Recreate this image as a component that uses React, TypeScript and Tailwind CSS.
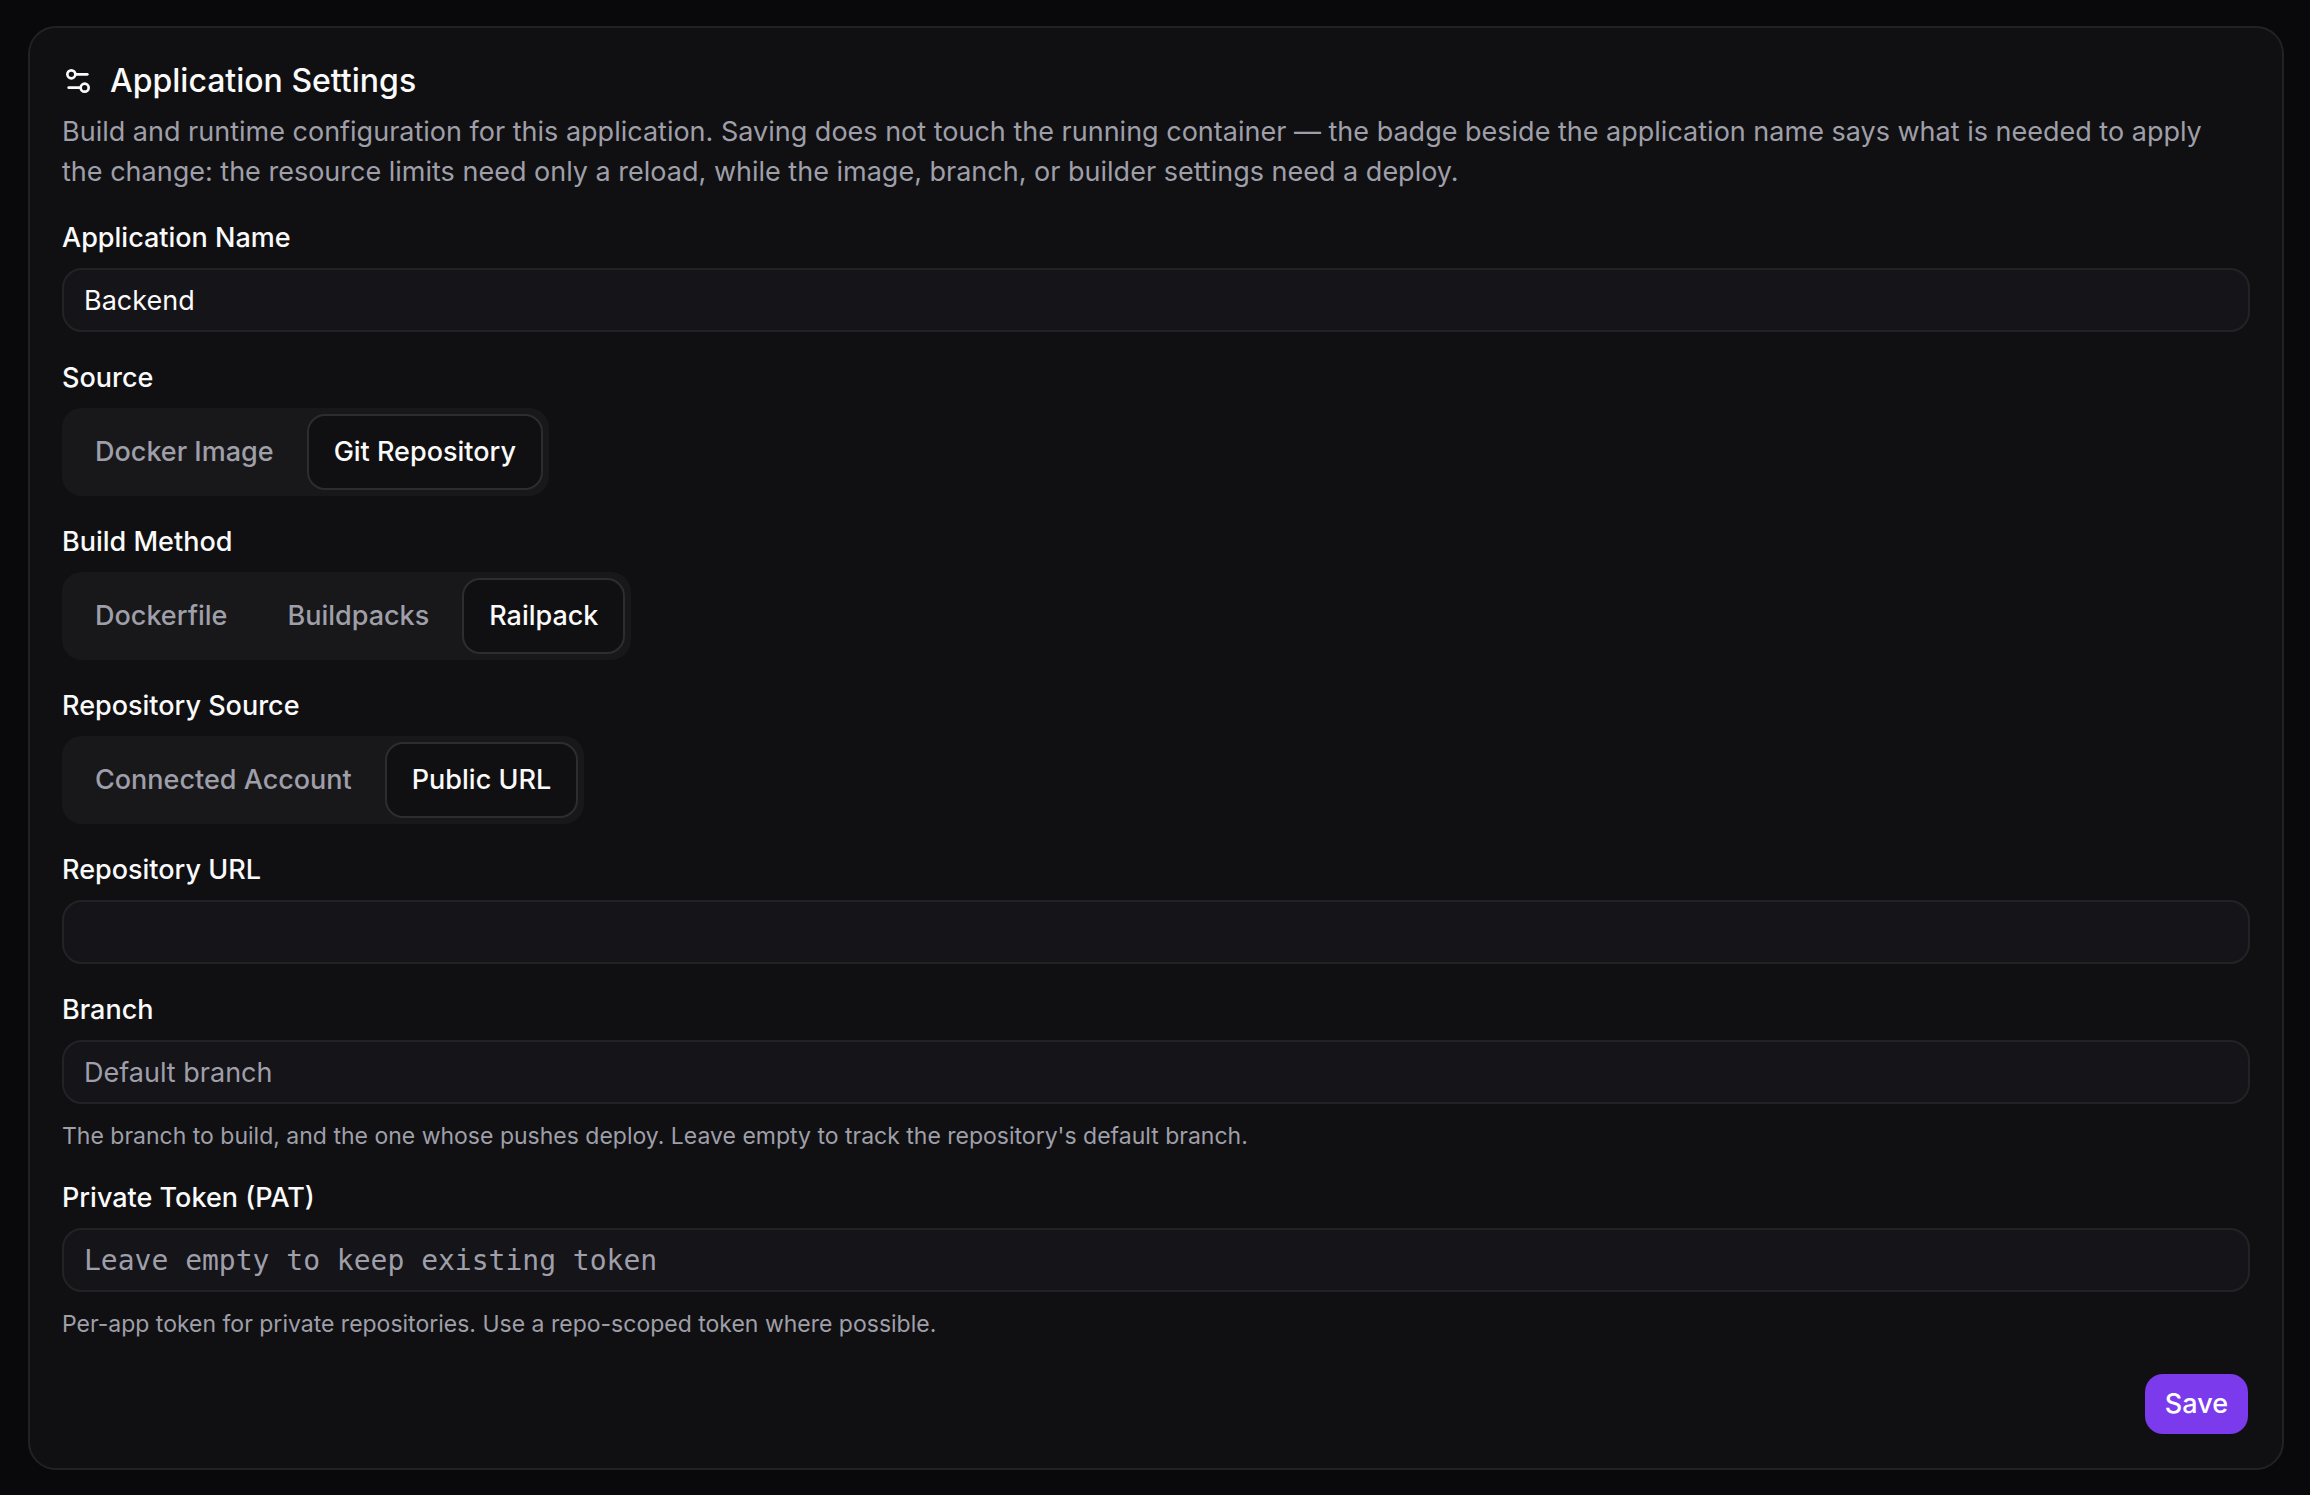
import { useId, useState, type InputHTMLAttributes } from "react";
import { Settings2 } from "lucide-react";

function TextField({
  label,
  help,
  mono = false,
  ...rest
}: { label: string; help?: string; mono?: boolean } & InputHTMLAttributes<HTMLInputElement>) {
  const id = useId();
  return (
    <div className="flex flex-col gap-4">
      <label htmlFor={id} className="self-start text-[27px] leading-7 font-medium">
        {label}
      </label>
      <input
        id={id}
        aria-describedby={help ? id + "-help" : undefined}
        className={
          "h-16 w-full rounded-[20px] border-2 border-[#232327] bg-[#151419] px-5 text-zinc-50 outline-none placeholder:text-[#9f9fa9] focus-visible:border-violet-600 " +
          (mono ? "font-['DejaVu_Sans_Mono',monospace] text-[28px]" : "text-[27px]")
        }
        {...rest}
      />
      {help && (
        <p id={id + "-help"} className="text-[23px] leading-8 text-[#9f9fa9]">
          {help}
        </p>
      )}
    </div>
  );
}

function Segmented({ label, options, initial }: { label: string; options: string[]; initial: string }) {
  const id = useId();
  const [value, setValue] = useState(initial);
  return (
    <div className="flex flex-col items-start gap-4">
      <span id={id} className="text-[27px] leading-7 font-medium">
        {label}
      </span>
      <div role="group" aria-labelledby={id} className="flex gap-1.5 rounded-[20px] bg-[#18181a] p-1.5">
        {options.map((option) => (
          <button
            key={option}
            type="button"
            aria-pressed={option === value}
            onClick={() => setValue(option)}
            className={
              "h-[76px] rounded-[18px] border-2 px-[25px] text-[27px] font-medium whitespace-nowrap " +
              (option === value
                ? "border-[#2c2c33] bg-[#101012] text-zinc-50"
                : "border-transparent text-[#9f9fa9] hover:text-zinc-50")
            }
          >
            {option}
          </button>
        ))}
      </div>
    </div>
  );
}

export default function App() {
  return (
    <main className="min-h-screen bg-[#09090b] pt-[26px] pr-[26px] pb-6 pl-7 font-[Inter,sans-serif] text-zinc-50">
      <form
        onSubmit={(e) => e.preventDefault()}
        className="flex flex-col gap-8 rounded-[28px] border-2 border-[#222224] bg-[#101012] p-8"
      >
        <header className="flex flex-col gap-2.5">
          <h1 className="flex items-center gap-4 text-[32px] leading-[42px] font-medium">
            <Settings2 size={32} aria-hidden="true" />
            Application Settings
          </h1>
          <p className="pr-8 text-[27px] leading-10 text-[#9f9fa9]">
            Build and runtime configuration for this application. Saving does not touch the running container — the
            badge beside the application name says what is needed to apply the change: the resource limits need only a
            reload, while the image, branch, or builder settings need a deploy.
          </p>
        </header>
        <TextField label="Application Name" defaultValue="Backend" />
        <Segmented label="Source" options={["Docker Image", "Git Repository"]} initial="Git Repository" />
        <Segmented label="Build Method" options={["Dockerfile", "Buildpacks", "Railpack"]} initial="Railpack" />
        <Segmented label="Repository Source" options={["Connected Account", "Public URL"]} initial="Public URL" />
        <TextField label="Repository URL" />
        <TextField
          label="Branch"
          placeholder="Default branch"
          help="The branch to build, and the one whose pushes deploy. Leave empty to track the repository's default branch."
        />
        <TextField
          label="Private Token (PAT)"
          placeholder="Leave empty to keep existing token"
          mono
          help="Per-app token for private repositories. Use a repo-scoped token where possible."
        />
        <button
          type="submit"
          className="h-16 self-end rounded-[20px] border-2 border-transparent bg-[#7c3aed] bg-clip-padding px-5 text-[27px] font-medium text-white hover:bg-violet-500"
        >
          Save
        </button>
      </form>
    </main>
  );
}
